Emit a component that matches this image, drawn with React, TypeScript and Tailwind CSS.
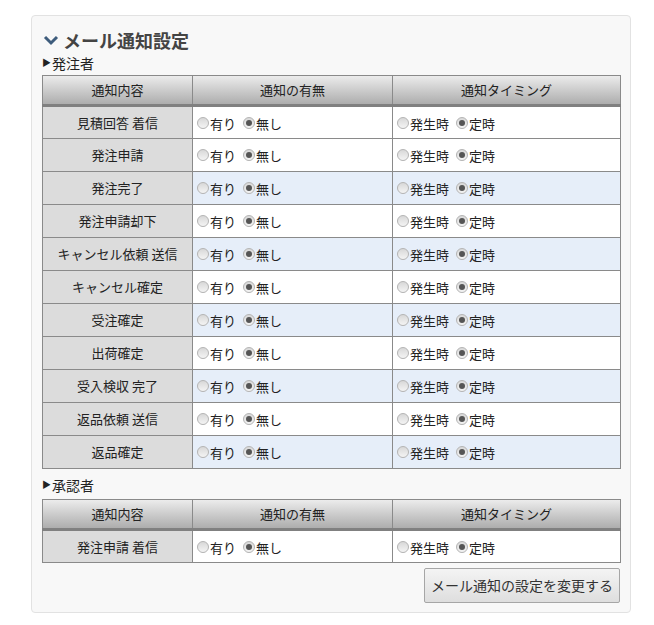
import React from 'react'

const font = { fontFamily: '"Noto Sans CJK JP", "Noto Sans", sans-serif' }

const ordererRows = [
  '見積回答 着信',
  '発注申請',
  '発注完了',
  '発注申請却下',
  'キャンセル依頼 送信',
  'キャンセル確定',
  '受注確定',
  '出荷確定',
  '受入検収 完了',
  '返品依頼 送信',
  '返品確定',
]

function Radio({ checked, label }: { checked?: boolean; label: string }) {
  return (
    <span className="flex items-center mr-[7px]">
      <span className="w-[12px] h-[12px] rounded-full border border-[#b4b4b4] bg-gradient-to-b from-[#d8d8d8] to-[#f4f4f4] flex items-center justify-center mr-[1px]">
        {checked && <span className="w-[6px] h-[6px] rounded-full bg-[#555]" />}
      </span>
      <span className="leading-[16px] pt-[2px]">{label}</span>
    </span>
  )
}

function SettingsTable({ rows, shaded }: { rows: string[]; shaded: boolean }) {
  return (
    <table className="w-[578px] border-collapse text-[13px] text-[#222] table-fixed">
      <colgroup>
        <col className="w-[150px]" />
        <col className="w-[200px]" />
        <col className="w-[228px]" />
      </colgroup>
      <thead>
        <tr className="h-[30px] bg-gradient-to-b from-[#ececec] to-[#a9a9a9]">
          {['通知内容', '通知の有無', '通知タイミング'].map((h) => (
            <th key={h} className="border border-[#8a8a8a] border-b-[3px] border-b-[#808080] font-normal text-center">
              {h}
            </th>
          ))}
        </tr>
      </thead>
      <tbody>
        {rows.map((r, i) => {
          const blue = shaded && i % 2 === 0 && i > 0
          return (
            <tr key={r} className={`h-[33px] ${blue ? 'bg-[#e6eef9]' : 'bg-white'}`}>
              <td className="border border-[#8a8a8a] bg-[#dcdcdc] text-center">{r}</td>
              <td className="border border-[#8a8a8a] pl-[4px]">
                <div className="flex items-center">
                  <Radio label="有り" />
                  <Radio checked label="無し" />
                </div>
              </td>
              <td className="border border-[#8a8a8a] pl-[4px]">
                <div className="flex items-center">
                  <Radio label="発生時" />
                  <Radio checked label="定時" />
                </div>
              </td>
            </tr>
          )
        })}
      </tbody>
    </table>
  )
}

export default function App() {
  return (
    <div className="w-[654px] h-[625px] bg-white pt-[15px] pl-[31px]" style={font}>
      <div className="w-[600px] h-[598px] border border-[#e2e2e2] rounded-[4px] bg-[#f8f8f8] px-[10px] pt-[12px]">
        <h2 className="flex items-center gap-[4px] text-[18px] font-bold text-[#444] leading-[24px]">
          <svg width="16" height="12" viewBox="0 0 16 12" className="ml-[1px]">
            <path d="M2 3 L8 9 L14 3" fill="none" stroke="#3e5c7c" strokeWidth="3" />
          </svg>
          メール通知設定
        </h2>
        <div className="flex items-center text-[14px] text-[#222] leading-[20px] mt-[1px] mb-[2px]">
          <span className="text-[9px] mr-[1px]">▶</span>発注者
        </div>
        <SettingsTable rows={ordererRows} shaded />
        <div className="flex items-center text-[14px] text-[#222] leading-[20px] mt-[6px] mb-[4px]">
          <span className="text-[9px] mr-[1px]">▶</span>承認者
        </div>
        <SettingsTable rows={['発注申請 着信']} shaded={false} />
        <div className="flex justify-end mt-[5px]">
          <button className="w-[196px] h-[35px] border border-[#a6a6a6] rounded-[2px] bg-gradient-to-b from-[#f4f4f4] to-[#dedede] text-[14px] text-[#333]">
            メール通知の設定を変更する
          </button>
        </div>
      </div>
    </div>
  )
}
